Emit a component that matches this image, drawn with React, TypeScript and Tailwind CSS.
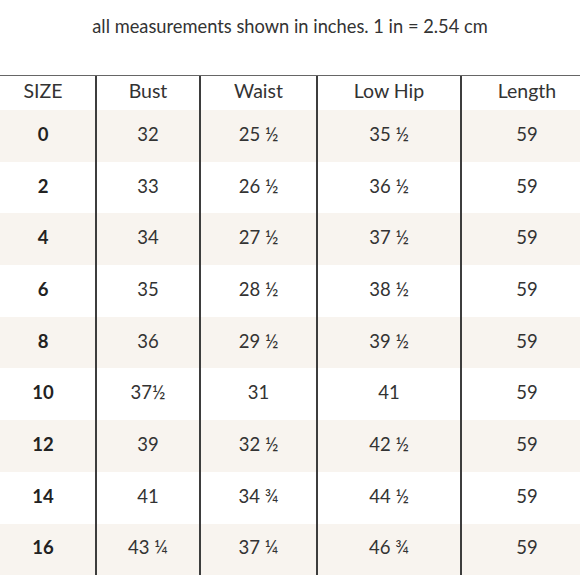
import React from 'react';

const rows: string[][] = [
  ['0', '32', '25 ½', '35 ½', '59'],
  ['2', '33', '26 ½', '36 ½', '59'],
  ['4', '34', '27 ½', '37 ½', '59'],
  ['6', '35', '28 ½', '38 ½', '59'],
  ['8', '36', '29 ½', '39 ½', '59'],
  ['10', '37½', '31', '41', '59'],
  ['12', '39', '32 ½', '42 ½', '59'],
  ['14', '41', '34 ¾', '44 ½', '59'],
  ['16', '43 ¼', '37 ¼', '46 ¾', '59'],
];

const headers = ['SIZE', 'Bust', 'Waist', 'Low Hip', 'Length'];

const App: React.FC = () => {
  return (
    <div className="w-[580px] h-[580px] bg-white overflow-hidden text-[#333]" style={{ fontFamily: 'Lato, "Open Sans", sans-serif' }}>
      <div className="h-[75px] pt-[14px] text-center text-[18.3px] leading-[24px]">
        all measurements shown in inches. 1 in = 2.54 cm
      </div>
      {/* table is wider than the frame; first and last columns are cropped */}
      <div className="ml-[-9px] w-[601px] border-t border-[#666]">
        <div className="grid grid-cols-[104px_104px_117px_144px_132px] h-[34px]">
          {headers.map((h, i) => (
            <div
              key={h}
              className={`flex items-center justify-center pb-[5px] text-[19.5px] ${i > 0 ? 'border-l-2 border-[#3d3d3d]' : ''}`}
            >
              {h}
            </div>
          ))}
        </div>
        {rows.map((r, ri) => (
          <div
            key={r[0]}
            className={`grid grid-cols-[104px_104px_117px_144px_132px] h-[51.7px] ${ri % 2 === 0 ? 'bg-[#f8f4ef]' : 'bg-white'}`}
          >
            {r.map((c, ci) => (
              <div
                key={ci}
                className={`flex items-center justify-center pb-[2px] text-[18.5px] ${ci === 0 ? 'font-bold text-[#222]' : 'border-l-2 border-[#3d3d3d]'}`}
              >
                {c}
              </div>
            ))}
          </div>
        ))}
      </div>
    </div>
  );
};

export default App;
